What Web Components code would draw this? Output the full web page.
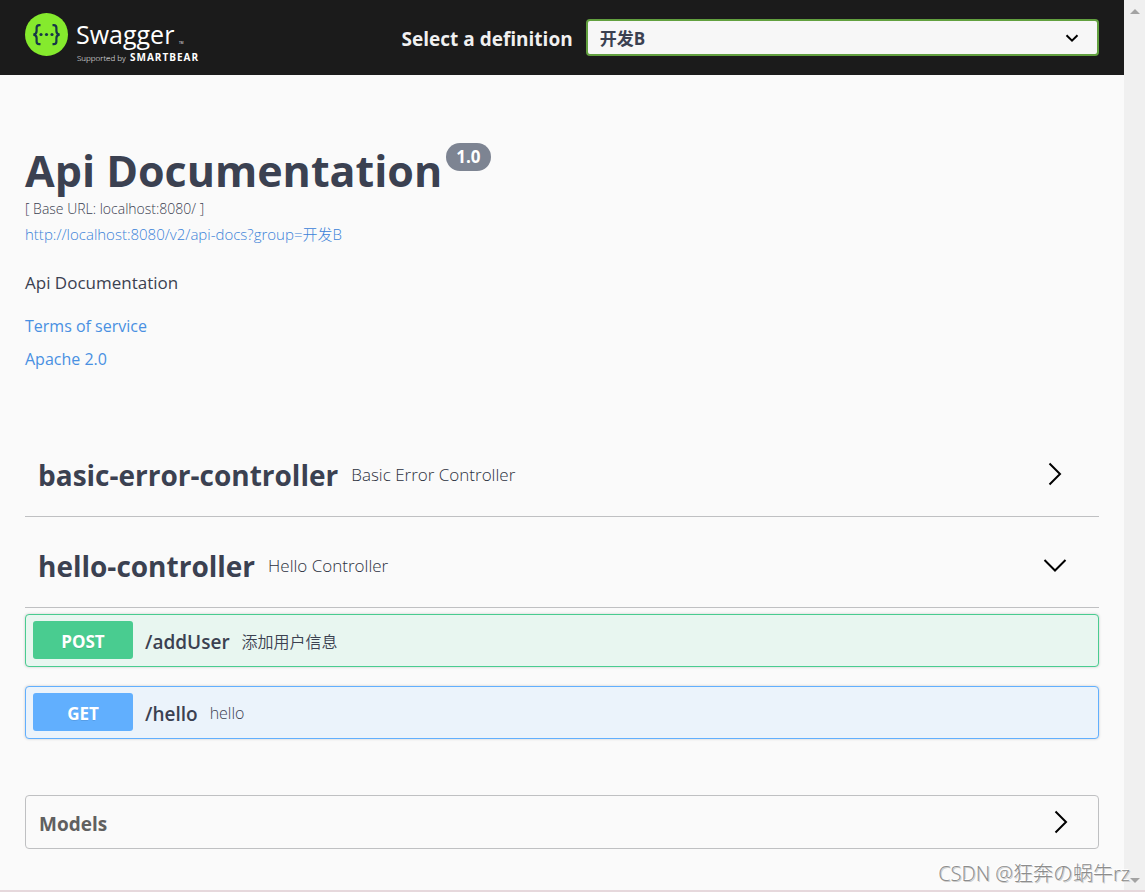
<!DOCTYPE html>
<html lang="en">
<head>
<meta charset="utf-8">
<meta name="viewport" content="width=device-width, initial-scale=1">
<title>Swagger UI</title>
<style>
  body {
    margin: 0;
    background: #fafafa;
    color: #3b4151;
    font-family: "Open Sans", "Noto Sans CJK SC", sans-serif;
  }
</style>
</head>
<body>
<docs-app></docs-app>

<template id="docs-app">
  <style>
    :host { display: flex; position: relative; box-sizing: border-box; min-height: 100vh; border-bottom: 2px solid #e6d8dc; }
    main { flex: 1; min-width: 0; }
    .wrap { padding: 0 25px; }
    .ops { display: grid; gap: 19px; padding: 6px 0 56px; }
  </style>
  <main>
    <docs-topbar></docs-topbar>
    <div class="wrap">
      <api-info></api-info>
      <tag-header name="basic-error-controller">Basic Error Controller</tag-header>
      <tag-header name="hello-controller" open>Hello Controller</tag-header>
      <div class="ops">
        <api-operation method="post" path="/addUser">添加用户信息</api-operation>
        <api-operation method="get" path="/hello">hello</api-operation>
      </div>
      <models-panel>Models</models-panel>
    </div>
  </main>
  <page-scroller></page-scroller>
  <water-mark>CSDN @狂奔の蜗牛rz</water-mark>
</template>

<template id="docs-topbar">
  <style>
    :host { display: flex; align-items: center; box-sizing: border-box; height: 75px; padding: 0 25px; background: #1b1b1b; }
    label { margin-left: auto; padding: 2px 13px 0 0; color: #f0f0f0; font-size: 19px; font-weight: 700; white-space: nowrap; }
    .field { display: grid; align-items: center; width: 47.8%; }
    .field > * { grid-area: 1 / 1; }
    select {
      appearance: none; width: 100%; height: 37px; margin: 0; padding: 2px 40px 0 12px;
      border: 2px solid #62a03f; border-radius: 4px; background: #f7f7f7; color: #3b4151;
      font: 700 17px "Open Sans", "Noto Sans CJK SC", sans-serif;
    }
    svg { justify-self: end; margin-right: 20px; pointer-events: none; }
  </style>
  <swagger-logo></swagger-logo>
  <label for="definition">Select a definition</label>
  <div class="field">
    <select id="definition"><option>开发B</option></select>
    <svg width="14" height="14" viewBox="0 0 14 14" fill="none" stroke="#000" stroke-width="2" aria-hidden="true"><path d="M1.500 4.200 7 9.600l5.500-5.400"/></svg>
  </div>
</template>

<template id="swagger-logo">
  <style>
    :host { display: block; }
    a { display: block; color: #fff; }
    svg { display: block; }
    text { font-family: "Open Sans", sans-serif; fill: #fff; }
  </style>
  <a href="#" aria-label="Swagger">
    <svg width="180" height="51" viewBox="0 0 180 51">
      <circle cx="21.500" cy="22.500" r="21.500" fill="#85ea2d"/>
      <g fill="none" stroke="#173647" stroke-width="2.200">
        <path d="M15.500 13.100h-1.300c-1.900 0-2.600 1-2.600 2.700v3.300c0 2.300-1 3.200-3.200 3.500 2.200.3 3.200 1.200 3.200 3.500v3.300c0 1.700.7 2.700 2.600 2.700h1.300"/>
        <path d="M27.500 13.100h1.300c1.900 0 2.600 1 2.600 2.700v3.300c0 2.300 1 3.200 3.200 3.500-2.200.3-3.200 1.200-3.200 3.500v3.300c0 1.700-.7 2.700-2.600 2.700h-1.300"/>
      </g>
      <g fill="#173647"><circle cx="16" cy="22.500" r="1.600"/><circle cx="21.500" cy="22.500" r="1.600"/><circle cx="27" cy="22.500" r="1.600"/></g>
      <text x="51" y="32" font-size="25">Swagger</text>
      <text x="154" y="32" font-size="3">TM</text>
      <text x="52" y="49" font-size="8" font-weight="300">Supported by</text>
      <text x="105" y="49" font-size="10" font-weight="700" letter-spacing="1">SMARTBEAR</text>
    </svg>
  </a>
</template>

<template id="api-info">
  <style>
    :host { display: block; padding: 67px 0 51px; }
    h1 { display: flex; align-items: flex-start; gap: 4px; margin: 0; font-size: 43px; line-height: 58px; white-space: nowrap; }
    .version { margin-top: 1px; padding: 0 10px; border-radius: 14px; background: #7d8492; color: #fff; font-size: 17px; line-height: 28px; }
    .base { margin: 0; font-size: 14px; font-weight: 300; line-height: 18px; }
    a { display: block; color: #4990e2; text-decoration: none; }
    .spec { color: #3b82d8; font-size: 15px; font-weight: 300; line-height: 33px; }
    .text { margin: 18px 0 13px; font-size: 17px; line-height: 28px; }
    .meta { font-size: 16px; line-height: 33px; }
    .meta:last-child { margin-bottom: -1px; }
  </style>
  <h1><span>Api Documentation</span><span class="version">1.0</span></h1>
  <p class="base">[ Base URL: localhost:8080/ ]</p>
  <a class="spec" href="#">http://localhost:8080/v2/api-docs?group=开发B</a>
  <p class="text">Api Documentation</p>
  <a class="meta" href="#">Terms of service</a>
  <a class="meta" href="#">Apache 2.0</a>
</template>

<template id="tag-header">
  <style>
    :host { display: flex; align-items: center; box-sizing: border-box; height: 91px; padding: 8px 31px 0 13px; border-bottom: 1px solid #bfc0c2; }
    h2 { margin: 0; font-size: 28px; line-height: 40px; }
    p { flex: 1; margin: 0 0 0 13px; color: #2c3140; font-size: 17px; font-weight: 300; line-height: 24px; }
    button { display: block; padding: 0; border: 0; background: none; }
    svg { display: block; }
    .down { display: none; }
    :host([open]) .down { display: block; }
    :host([open]) .right { display: none; }
  </style>
  <h2></h2>
  <p><slot></slot></p>
  <button type="button" aria-label="Toggle section">
    <svg width="26" height="26" viewBox="0 0 26 26" fill="none" stroke="#000" stroke-width="2">
      <path class="right" d="M7.500 1.500 18 12 7.500 22.500"/>
      <path class="down" d="M2.500 7 13 17.500 23.500 7"/>
    </svg>
  </button>
</template>

<template id="api-operation">
  <style>
    :host { --tone: #49cc90; --fill: #e8f6f0; display: flex; align-items: center; box-sizing: border-box; height: 53px; padding: 0 7px 1px; border: 1px solid var(--tone); border-radius: 4px; background: var(--fill); box-shadow: 0 0 3px rgba(0, 0, 0, .19); }
    :host([method="get"]) { --tone: #61affe; --fill: #ebf3fb; }
    button { width: 100px; height: 38px; padding: 2px 0 0; border: 0; border-radius: 3px; background: var(--tone); color: #fff; font: 700 17px "Open Sans", sans-serif; text-shadow: 0 1px 0 rgba(0, 0, 0, .1); }
    .path { margin: 0 12px; padding-top: 3px; font-size: 19px; font-weight: 600; }
    .note { padding-top: 1px; font-size: 16px; font-weight: 350; }
  </style>
  <button type="button"></button>
  <span class="path"></span>
  <span class="note"><slot></slot></span>
</template>

<template id="models-panel">
  <style>
    :host { display: flex; align-items: center; justify-content: space-between; box-sizing: border-box; height: 54px; padding: 0 24px 0 13px; border: 1px solid #bfc0c2; border-radius: 4px; color: #606060; }
    h2 { margin: 0; padding-top: 3px; font-size: 19px; }
    button { display: block; padding: 0; border: 0; background: none; }
    svg { display: block; }
  </style>
  <h2><slot></slot></h2>
  <button type="button" aria-label="Toggle models">
    <svg width="26" height="26" viewBox="0 0 26 26" fill="none" stroke="#000" stroke-width="2"><path d="M7.500 2.500 18 13 7.500 23.500"/></svg>
  </button>
</template>

<template id="page-scroller">
  <style>
    :host { display: flex; flex-direction: column; justify-content: space-between; align-items: center; box-sizing: border-box; width: 21px; padding: 9px 0 7px; background: #f0f0f0; }
    svg { display: block; fill: #a3a3a3; }
  </style>
  <svg width="10" height="5" viewBox="0 0 10 5"><path d="M0 5 5 0l5 5z"/></svg>
  <svg width="10" height="5" viewBox="0 0 10 5"><path d="M0 0l5 5 5-5z"/></svg>
</template>

<template id="water-mark">
  <style>
    :host { display: block; position: absolute; right: 15px; bottom: 2px; color: #8c8c8c; font-size: 20px; font-weight: 300; line-height: 28px; text-shadow: -1px -1px 0 #fff, 1px 1px 0 #ccc; white-space: nowrap; pointer-events: none; }
  </style>
  <slot></slot>
</template>

<script>
  class TemplateElement extends HTMLElement {
    connectedCallback() {
      if (this.shadowRoot) return;
      const root = this.attachShadow({ mode: "open" });
      root.append(document.getElementById(this.localName).content.cloneNode(true));
      this.ready(root);
    }
    ready() {}
  }

  class TagHeader extends TemplateElement {
    ready(root) {
      root.querySelector("h2").textContent = this.getAttribute("name");
      root.querySelector("button").addEventListener("click", () => this.toggleAttribute("open"));
    }
  }

  class ApiOperation extends TemplateElement {
    ready(root) {
      root.querySelector("button").textContent = this.getAttribute("method").toUpperCase();
      root.querySelector(".path").textContent = this.getAttribute("path");
    }
  }

  customElements.define("tag-header", TagHeader);
  customElements.define("api-operation", ApiOperation);
  for (const name of ["swagger-logo", "docs-topbar", "api-info", "models-panel", "page-scroller", "water-mark", "docs-app"]) {
    customElements.define(name, class extends TemplateElement {});
  }
</script>
</body>
</html>
